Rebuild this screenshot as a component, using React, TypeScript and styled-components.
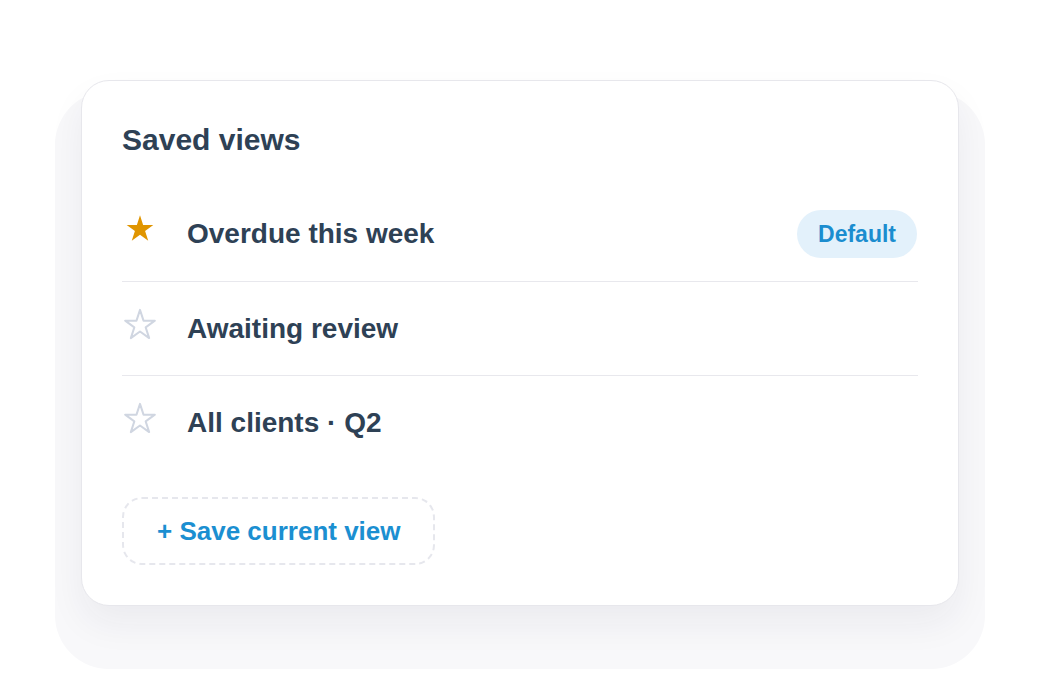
import styled, { createGlobalStyle } from "styled-components";

const GlobalStyle = createGlobalStyle`
  html, body {
    margin: 0;
    padding: 0;
    background: #ffffff;
  }
  body {
    font-family: "Liberation Sans", Arial, Helvetica, sans-serif;
    -webkit-font-smoothing: antialiased;
  }
  * {
    box-sizing: border-box;
  }
`;

const Page = styled.div`
  min-height: 100vh;
  padding-bottom: 2px;
  display: flex;
  align-items: center;
  justify-content: center;
`;

const Card = styled.section`
  width: 878px;
  padding: 40px;
  background: #ffffff;
  border: 1px solid #e7e7ec;
  border-radius: 28px;
  box-shadow: 0 18px 36px rgba(30, 40, 70, 0.06), 0 37px 0 26px #f8f8fa;
  display: flex;
  flex-direction: column;
`;

const Title = styled.h2`
  margin: 0 0 28px;
  font-size: 30px;
  line-height: 38px;
  font-weight: 700;
  color: #2e4155;
`;

const List = styled.ul`
  list-style: none;
  margin: 0;
  padding: 0;
`;

const Row = styled.li`
  height: 94px;
  display: flex;
  align-items: center;
  & + & {
    border-top: 1px solid #e8e8ed;
  }
`;

const IconSlot = styled.span<{ $lift: number }>`
  width: 36px;
  height: 36px;
  margin-right: 29px;
  display: flex;
  align-items: center;
  justify-content: center;
  transform: translateY(${(p) => -p.$lift}px);
`;

const Name = styled.span`
  flex: 1;
  font-size: 28px;
  line-height: 34px;
  font-weight: 700;
  color: #2e4155;
`;

const Badge = styled.span`
  height: 48px;
  padding: 0 21px;
  margin-right: 1px;
  border-radius: 24px;
  background: #e3f1fb;
  color: #1b8dcf;
  font-size: 23px;
  font-weight: 700;
  display: flex;
  align-items: center;
`;

const SaveButton = styled.button`
  align-self: flex-start;
  margin-top: 28px;
  height: 68px;
  padding: 0 32px 0 33px;
  border: 2px dashed #e6e7ed;
  border-radius: 20px;
  background: transparent;
  color: #1b8fd1;
  font-family: inherit;
  font-size: 26px;
  font-weight: 700;
  cursor: pointer;
`;

function starPoints(r: number) {
  const inner = r * 0.382;
  const shift = r * 0.095;
  const pts: string[] = [];
  for (let i = 0; i < 10; i++) {
    const rad = i % 2 === 0 ? r : inner;
    const a = (Math.PI / 5) * i - Math.PI / 2;
    pts.push(`${(Math.cos(a) * rad).toFixed(2)},${(Math.sin(a) * rad + shift).toFixed(2)}`);
  }
  return pts.join(" ");
}

const Star = ({ filled }: { filled: boolean }) =>
  filled ? (
    <svg width="36" height="36" viewBox="-18 -18 36 36">
      <polygon points={starPoints(14)} fill="#e09500" />
    </svg>
  ) : (
    <svg width="36" height="36" viewBox="-18 -18 36 36">
      <polygon
        points={starPoints(15.6)}
        fill="none"
        stroke="#d0d6e1"
        strokeWidth="2"
        strokeLinejoin="round"
      />
    </svg>
  );

const views = [
  { name: "Overdue this week", starred: true, isDefault: true },
  { name: "Awaiting review", starred: false, isDefault: false },
  { name: "All clients · Q2", starred: false, isDefault: false },
];

export default function App() {
  return (
    <>
      <GlobalStyle />
      <Page>
        <Card>
          <Title>Saved views</Title>
          <List>
            {views.map((v) => (
              <Row key={v.name}>
                <IconSlot $lift={v.starred ? 6 : 5}>
                  <Star filled={v.starred} />
                </IconSlot>
                <Name>{v.name}</Name>
                {v.isDefault && <Badge>Default</Badge>}
              </Row>
            ))}
          </List>
          <SaveButton>+ Save current view</SaveButton>
        </Card>
      </Page>
    </>
  );
}
